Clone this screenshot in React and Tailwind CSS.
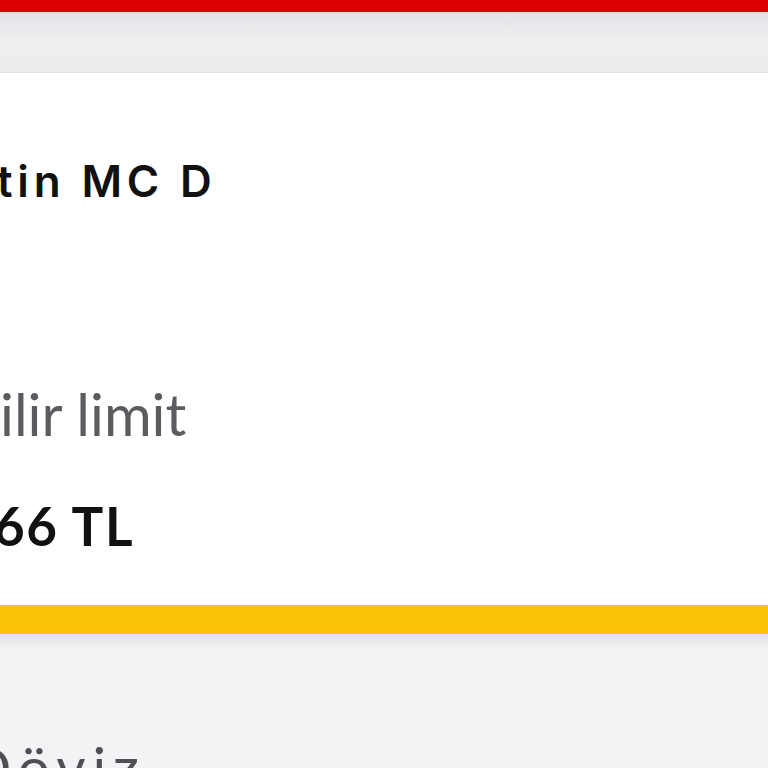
export default function App() {
  return (
    <div className="h-[768px] w-[768px] overflow-hidden bg-[#f3f3f5]">
      <div className="h-[12px] bg-[#dc0005]" />
      <div className="h-[2px] bg-[#f2d4da]" />
      <div className="h-[59px] bg-gradient-to-b from-[#e4e5e8] via-[#efeff1] to-[#ebebed] border-b border-[#e2e2e5]" />
      <div className="h-[532px] bg-white flex flex-col overflow-hidden">
        <div
          className="mt-[78px] -ml-[3px] whitespace-nowrap text-[44px] font-semibold leading-[60px] tracking-[0.11em] text-[#111]"
          style={{ fontFamily: 'Inter, "Noto Sans", sans-serif' }}
        >
          tin MC D
        </div>
        <div
          className="mt-[171px] whitespace-nowrap text-[58px] leading-[64px] text-[#5b5b60]"
          style={{ fontFamily: 'Lato, "Noto Sans", sans-serif' }}
        >
          ilir limit
        </div>
        <div
          className="mt-[48px] -ml-[6px] whitespace-nowrap text-[53px] font-bold leading-[64px] tracking-[0.03em] text-[#111]"
          style={{ fontFamily: 'Lato, "Noto Sans", sans-serif' }}
        >
          66 TL
        </div>
      </div>
      <div className="h-[29px] bg-[#f9c405]" />
      <div className="h-[16px] bg-gradient-to-b from-[#dfe1e3] to-[#f3f3f5]" />
      <div
        className="mt-[86px] -ml-[32px] whitespace-nowrap text-[57px] leading-[60px] tracking-[0.12em] text-[#4f4f55]"
        style={{ fontFamily: 'Lato, "Noto Sans", sans-serif' }}
      >
        Döviz
      </div>
    </div>
  );
}
